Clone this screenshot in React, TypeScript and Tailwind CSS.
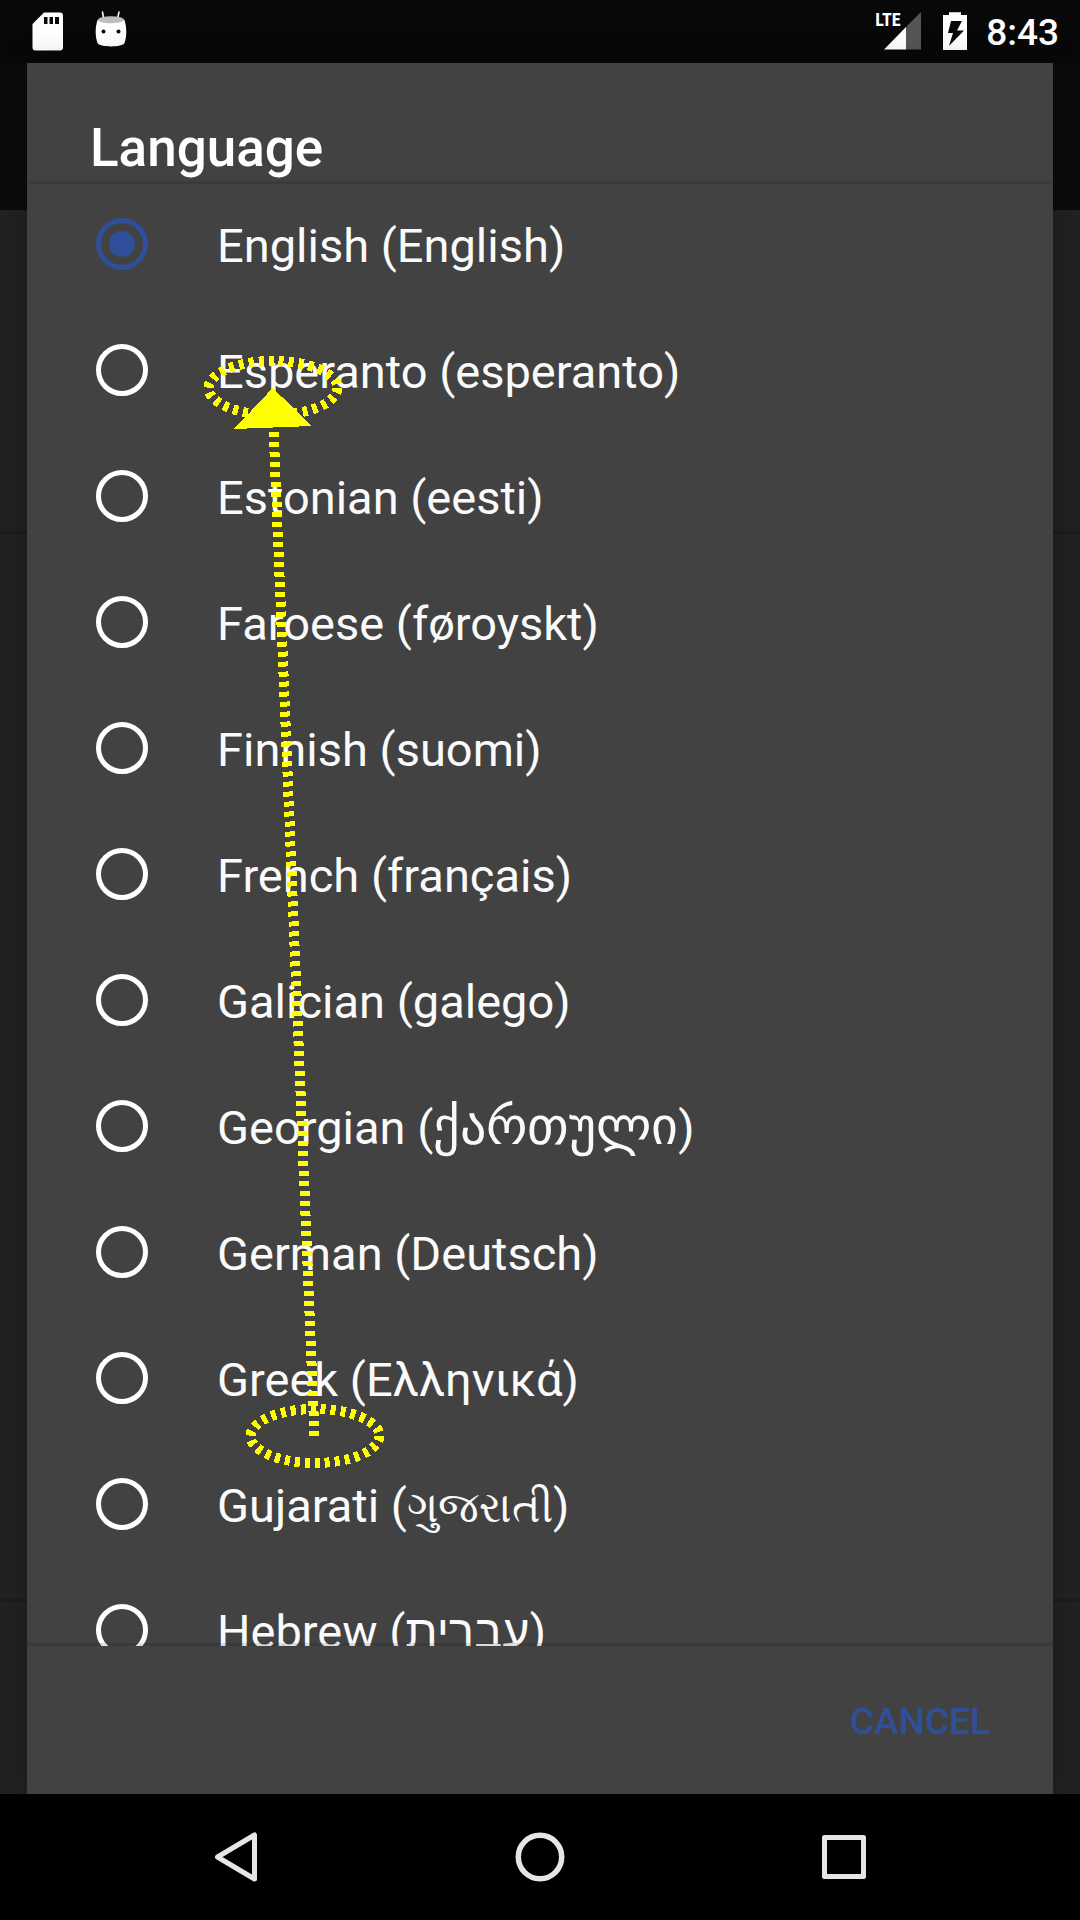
import { useState } from "react";

type Language = { name: string; native: string; nativeClass?: string };

const languages: Language[] = [
  { name: "English", native: "English" },
  { name: "Esperanto", native: "esperanto" },
  { name: "Estonian", native: "eesti" },
  { name: "Faroese", native: "føroyskt" },
  { name: "Finnish", native: "suomi" },
  { name: "French", native: "français" },
  { name: "Galician", native: "galego" },
  { name: "Georgian", native: "ქართული", nativeClass: "text-[52px] leading-none" },
  { name: "German", native: "Deutsch" },
  { name: "Greek", native: "Ελληνικά" },
  { name: "Gujarati", native: "ગુજરાતી", nativeClass: "text-[43px] leading-none" },
  { name: "Hebrew", native: "עברית" },
];

function StatusBar() {
  return (
    <header className="flex h-[63px] shrink-0 items-start bg-[#080808] pr-[21px] pl-8 text-white">
      <svg className="mt-3 h-[39px] w-[32px]" viewBox="0 0 32 39" fill="#fff" aria-label="SD card">
        <path
          fillRule="evenodd"
          d="M12 .5h16a3 3 0 0 1 3 3v32a3 3 0 0 1-3 3H3.500a3 3 0 0 1-3-3V12zM12 5v7h3.500V5zm5.500 0v7H21V5zM23 5v7h4V5z"
        />
      </svg>
      <svg className="mt-[10px] ml-[31px] h-[38px] w-[32px]" viewBox="0 0 32 38" aria-label="Android">
        <path d="M7.500 2l1.200 7M24 2l-1.500 7" stroke="#fff" strokeWidth="1.500" strokeLinecap="round" />
        <path
          d="M2.500 10C.2 17-.1 26 2.500 33c1.500 4.500 25.500 4.500 27 0 2.500-7 2.200-16 0-23z"
          fill="#fff"
        />
        <ellipse cx="16" cy="9.800" rx="13" ry="3.500" fill="#bdbdbd" />
        <circle cx="8.500" cy="21.500" r="2" fill="#080808" />
        <circle cx="23.500" cy="21.500" r="2" fill="#080808" />
      </svg>
      <div className="relative mt-3 ml-auto h-[38px] w-[46px]">
        <svg className="ml-auto h-[38px] w-[37px]" viewBox="0 0 37 38" aria-label="Signal">
          <path d="M37 0v37.500H22V15z" fill="#555" />
          <path d="M0 37.500L22 15v22.500z" fill="#fff" />
        </svg>
        <span className="absolute top-0 left-0 font-['Roboto_Condensed','Liberation_Sans_Narrow',Roboto,sans-serif] text-[18px] leading-4 font-bold">
          LTE
        </span>
      </div>
      <svg className="mt-3 ml-[21px] h-[38px] w-[26px]" viewBox="0 0 26 38" aria-label="Battery charging">
        <path
          fillRule="evenodd"
          fill="#fff"
          d="M1 3H7V.3h12V3h6v35H1zM9 9L6 21h5L7 34l15-15.500h-7L20 9z"
        />
      </svg>
      <time className="mt-[9px] ml-[18px] text-[37px] leading-[48px] font-medium">8:43</time>
    </header>
  );
}

function Backdrop() {
  return (
    <div className="absolute inset-0 flex flex-col bg-[#222]" aria-hidden="true">
      <div className="h-[147px] bg-[#0c0c0c]" />
      <div className="h-[321px]" />
      <div className="h-[3px] bg-[#1c1c1c]" />
      <div className="flex-1" />
      <div className="h-[3px] bg-[#1c1c1c]" />
      <div className="h-[192px]" />
    </div>
  );
}

function LanguageDialog() {
  const [selected, setSelected] = useState("English");
  return (
    <section
      role="dialog"
      aria-labelledby="dialog-title"
      className="relative mx-[27px] flex min-h-0 flex-1 flex-col bg-[#424242] shadow-[0_0_32px_rgba(0,0,0,0.25)]"
    >
      <h1
        id="dialog-title"
        className="px-[63px] pt-[53px] pb-px text-[53px] leading-[64px] font-medium text-white"
      >
        Language
      </h1>
      <div className="relative z-10 -mb-[3px] h-[3px] shrink-0 bg-black/12" />
      <div className="min-h-0 flex-1 overflow-y-auto [scrollbar-width:none]">
        {languages.map(({ name, native, nativeClass }) => (
          <label
            key={name}
            className="flex h-[126px] items-center gap-[69px] pl-[69px] text-[47px] leading-[56px] text-[#fafafa]"
          >
            <input
              type="radio"
              name="language"
              checked={selected === name}
              onChange={() => setSelected(name)}
              className="size-[52px] shrink-0 appearance-none rounded-full border-[5px] border-white p-2 checked:border-[#304f9b] checked:bg-[#304f9b] checked:bg-clip-content"
            />
            <span className="pt-1 whitespace-nowrap">
              {name} (<span className={nativeClass}>{native}</span>)
            </span>
          </label>
        ))}
      </div>
      <div className="relative z-10 -mt-[3px] h-[3px] shrink-0 bg-black/12" />
      <footer className="flex h-[148px] shrink-0 items-center justify-end pt-1 pr-[63px]">
        <button type="button" className="text-[37px] leading-[48px] font-medium text-[#304f9b]">
          CANCEL
        </button>
      </footer>
    </section>
  );
}

function NavBar() {
  return (
    <nav className="grid h-[126px] shrink-0 grid-cols-3 bg-black px-[84px]">
      <button type="button" aria-label="Back" className="flex items-center justify-center">
        <svg className="size-[52px]" viewBox="0 0 52 52" fill="none" stroke="#e6e6e6" strokeWidth="5" strokeLinejoin="round">
          <path d="M44.500 4v44L7.500 26z" />
        </svg>
      </button>
      <button type="button" aria-label="Home" className="flex items-center justify-center">
        <svg className="size-[52px]" viewBox="0 0 52 52" fill="none" stroke="#e6e6e6" strokeWidth="5.500">
          <circle cx="26" cy="26" r="21.700" />
        </svg>
      </button>
      <button type="button" aria-label="Recent apps" className="flex items-center justify-center">
        <svg className="size-[52px]" viewBox="0 0 52 52" fill="none" stroke="#e6e6e6" strokeWidth="5" strokeLinejoin="round">
          <rect x="6.500" y="6.500" width="39" height="39" />
        </svg>
      </button>
    </nav>
  );
}

function SwipeGesture() {
  return (
    <svg
      className="pointer-events-none absolute top-[350px] left-[200px] z-20 h-[1130px] w-[190px]"
      viewBox="200 350 190 1130"
      fill="none"
      stroke="#ff0"
      strokeWidth="10"
      strokeDasharray="5 5"
      shapeRendering="crispEdges"
      aria-hidden="true"
    >
      <ellipse cx="273" cy="388" rx="64.500" ry="27" />
      <ellipse cx="315" cy="1436" rx="64.500" ry="27" />
      <path d="M314.500 1436L273.500 428" />
      <path d="M272.700 388L312 426L234 429z" fill="#ff0" stroke="none" />
    </svg>
  );
}

export default function App() {
  return (
    <div className="relative flex h-screen flex-col overflow-hidden bg-black font-[Roboto,'Noto_Sans',sans-serif]">
      <StatusBar />
      <main className="relative flex min-h-0 flex-1 flex-col">
        <Backdrop />
        <LanguageDialog />
      </main>
      <NavBar />
      <SwipeGesture />
    </div>
  );
}
